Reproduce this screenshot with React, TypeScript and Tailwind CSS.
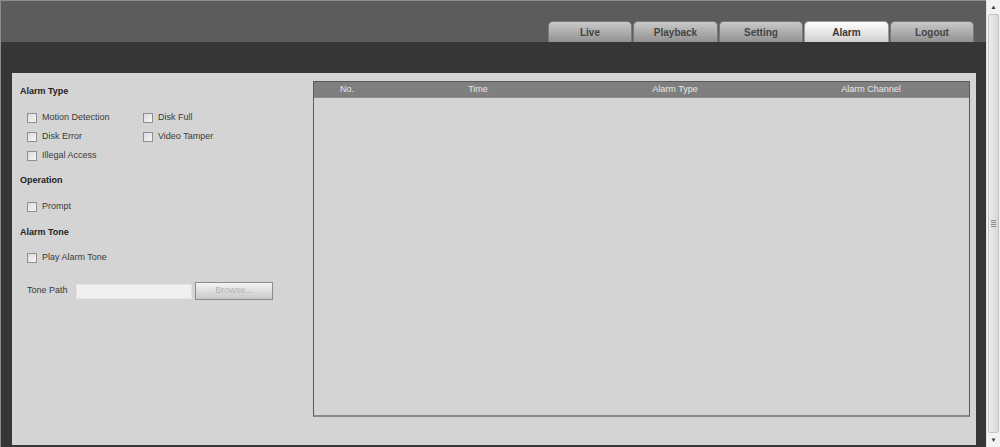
import React from "react";

const tabs = [
    { title: "Live", width: "w-[84px]" },
    { title: "Playback", width: "w-[85px]" },
    { title: "Setting", width: "w-[84px]" },
    { title: "Alarm", width: "w-[85px]" },
    { title: "Logout", width: "w-[84px]" },
];

const alarmTypes = [
    ["Motion Detection", "Disk Full"],
    ["Disk Error", "Video Tamper"],
    ["Illegal Access"],
];

const columns = [
    { title: "No.", width: "w-[66px]" },
    { title: "Time", width: "w-[196px]" },
    { title: "Alarm Type", width: "w-[198px]" },
    { title: "Alarm Channel", width: "w-[194px]" },
];

const Checkbox = ({ label }: { label: string }) => (
    <div className="flex items-center w-[116px] h-[19px]">
        <span className="w-[10px] h-[10px] border border-[#8e8e8e] bg-gradient-to-br from-[#dcdcdc] to-[#f6f6f6] shrink-0" />
        <span className="ml-[5px] text-[9px] text-[#3a3a3a] leading-none">{label}</span>
    </div>
);

const Heading = ({ title, className = "" }: { title: string; className?: string }) => (
    <div className={`h-[19px] flex items-center pl-[8px] text-[9px] font-bold text-[#222] ${className}`}>
        {title}
    </div>
);

const Scrollbar = () => (
    <div className="w-[14px] h-full bg-[#f2f2f2] border-l border-[#e2e2e2] flex flex-col items-center">
        <div className="h-[14px] flex items-center justify-center text-[6px] text-[#333] leading-none">▲</div>
        <div className="w-[11px] flex-1 border border-[#c4c4c4] rounded-[2px] bg-gradient-to-r from-[#ececec] via-[#e2e2e2] to-[#d8d8d8] flex items-center justify-center">
            <div className="flex flex-col gap-[1px]">
                <span className="w-[5px] h-[1px] bg-[#8a8a8a]" />
                <span className="w-[5px] h-[1px] bg-[#8a8a8a]" />
                <span className="w-[5px] h-[1px] bg-[#8a8a8a]" />
                <span className="w-[5px] h-[1px] bg-[#8a8a8a]" />
            </div>
        </div>
        <div className="h-[14px] flex items-center justify-center text-[6px] text-[#333] leading-none">▼</div>
    </div>
);

export default function App() {
    return (
        <div className="w-[1000px] h-[447px] flex bg-[#363636] overflow-hidden" style={{ fontFamily: '"Liberation Sans", Arial, sans-serif' }}>
            <div className="flex-1 flex flex-col border-t border-l border-[#8c8c8c]">
                {/* top bar with tabs */}
                <div className="h-[41px] bg-[#5c5c5c] flex items-end pl-[547px]">
                    {tabs.map((tab) => (
                        <div
                            key={tab.title}
                            className={`${tab.width} h-[21px] mr-[1px] rounded-t-[5px] border border-b-0 flex items-center justify-center text-[10px] font-bold ${
                                tab.title === "Alarm"
                                    ? "bg-gradient-to-b from-[#ffffff] to-[#cfcfcf] border-[#9a9a9a] text-[#383838]"
                                    : "bg-gradient-to-b from-[#c9c9c9] to-[#929292] border-[#7a7a7a] text-[#444]"
                            }`}
                        >
                            {tab.title}
                        </div>
                    ))}
                </div>

                {/* content area */}
                <div className="flex-1 pt-[31px] pl-[11px] pr-[10px] pb-[2px]">
                    <div className="h-full bg-[#d4d4d4] flex">
                        {/* left form */}
                        <div className="w-[301px] flex flex-col pt-[9px]">
                            <Heading title="Alarm Type" />
                            <div className="mt-[7px] pl-[15px]">
                                {alarmTypes.map((row, i) => (
                                    <div key={i} className="flex">
                                        {row.map((item) => (
                                            <Checkbox key={item} label={item} />
                                        ))}
                                    </div>
                                ))}
                            </div>

                            <Heading title="Operation" className="mt-[6px]" />
                            <div className="mt-[7px] pl-[15px]">
                                <Checkbox label="Prompt" />
                            </div>

                            <Heading title="Alarm Tone" className="mt-[7px]" />
                            <div className="mt-[6px] pl-[15px]">
                                <Checkbox label="Play Alarm Tone" />
                            </div>

                            <div className="mt-[15px] pl-[15px] flex items-center h-[18px]">
                                <span className="w-[49px] text-[9px] text-[#3a3a3a]">Tone Path</span>
                                <div className="w-[116px] h-[15px] bg-[#f0f0f0] border border-[#e4e4e4]" />
                                <div className="ml-[3px] w-[78px] h-[18px] border border-[#8a8a8a] bg-gradient-to-b from-[#f4f4f4] to-[#c8c8c8] flex items-center justify-center text-[9px] text-[#b2b2b2]">
                                    Browse...
                                </div>
                            </div>
                        </div>

                        {/* alarm table */}
                        <div className="flex-1 pt-[8px] pr-[6px] pb-[28px]">
                            <div className="h-full border border-[#5a5a5a] border-b-2 border-b-[#8a8a8a] bg-[#d4d4d4] flex flex-col">
                                <div className="h-[16px] bg-[#7f7f7f] border-b border-[#8c8c8c] flex">
                                    {columns.map((col) => (
                                        <div key={col.title} className={`${col.width} flex items-center justify-center text-[9px] text-[#e8e8e8]`}>
                                            {col.title}
                                        </div>
                                    ))}
                                </div>
                                <div className="flex-1" />
                            </div>
                        </div>
                    </div>
                </div>
            </div>
            <Scrollbar />
        </div>
    );
}
